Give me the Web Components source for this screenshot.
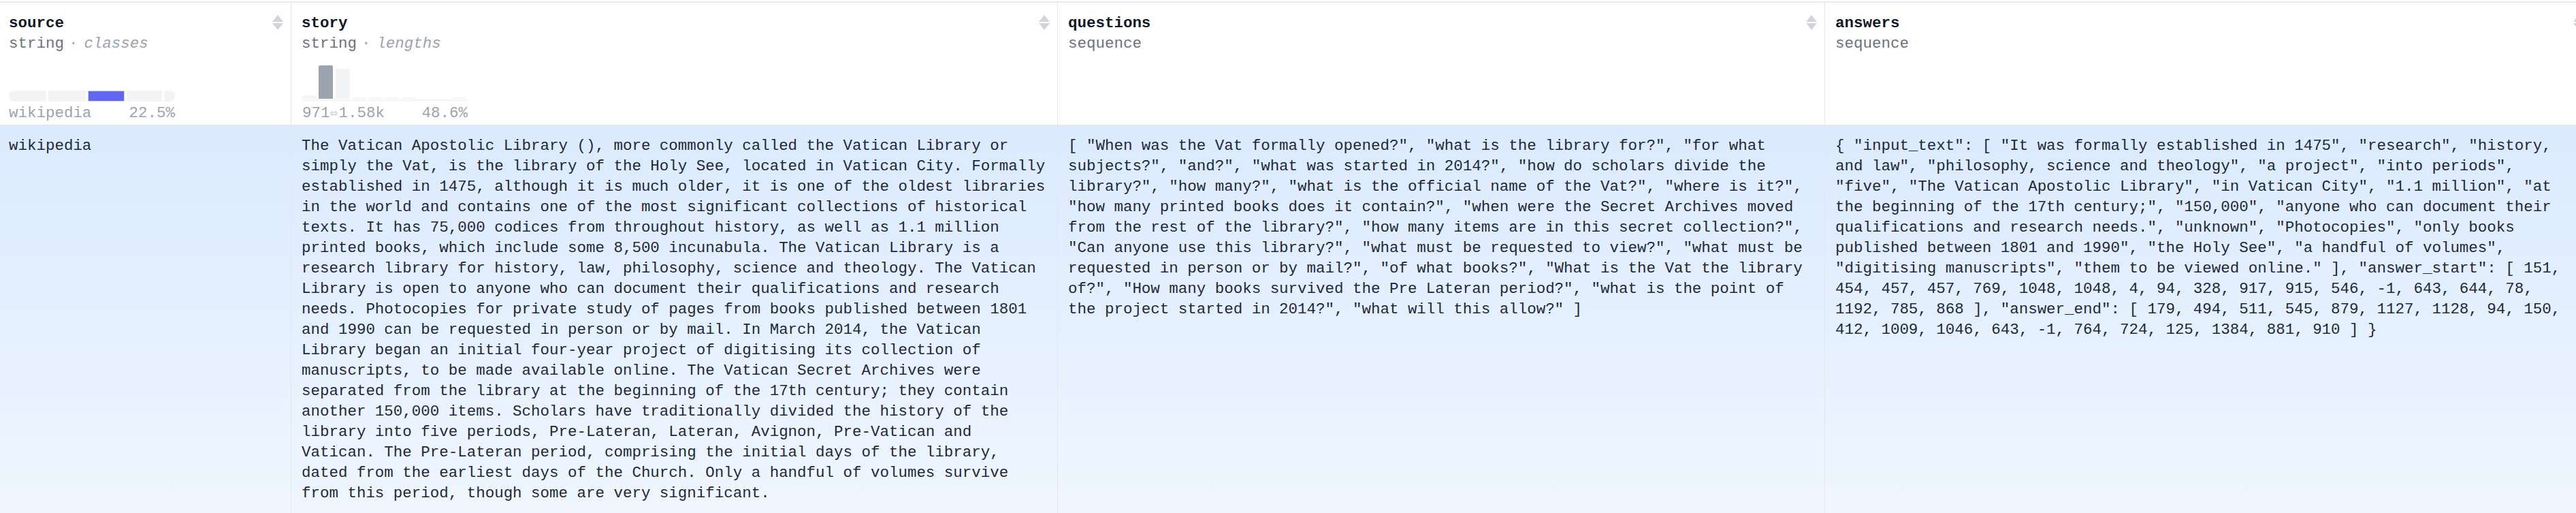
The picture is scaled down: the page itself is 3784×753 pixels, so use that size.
<!DOCTYPE html>
<html>
<head>
<meta charset="utf-8">
<title>Dataset viewer</title>
<style>
  html, body { margin: 0; background: #fff; overflow: hidden; }
  body { font: 400 22.48px/30px "Liberation Mono", "DejaVu Sans Mono", monospace; color: #1f2937; }
</style>
</head>
<body>
<data-table>
  <column-head name="source" type="string" kind="classes">
    <class-bar active="2" label="wikipedia" percent="22.5%"></class-bar>
  </column-head>
  <column-head name="story" type="string" kind="lengths">
    <length-histogram min="971" max="1.58k" percent="48.6%"></length-histogram>
  </column-head>
  <column-head name="questions" type="sequence"></column-head>
  <column-head name="answers" type="sequence"></column-head>

  <row-cell first>wikipedia</row-cell>
  <row-cell>The Vatican Apostolic Library (), more commonly called the Vatican Library or simply the Vat, is the library of the Holy See, located in Vatican City. Formally established in 1475, although it is much older, it is one of the oldest libraries in the world and contains one of the most significant collections of historical texts. It has 75,000 codices from throughout history, as well as 1.1 million printed books, which include some 8,500 incunabula. The Vatican Library is a research library for history, law, philosophy, science and theology. The Vatican Library is open to anyone who can document their qualifications and research needs. Photocopies for private study of pages from books published between 1801 and 1990 can be requested in person or by mail. In March 2014, the Vatican Library began an initial four-year project of digitising its collection of manuscripts, to be made available online. The Vatican Secret Archives were separated from the library at the beginning of the 17th century; they contain another 150,000 items. Scholars have traditionally divided the history of the library into five periods, Pre-Lateran, Lateran, Avignon, Pre-Vatican and Vatican. The Pre-Lateran period, comprising the initial days of the library, dated from the earliest days of the Church. Only a handful of volumes survive from this period, though some are very significant.</row-cell>
  <row-cell>[ "When was the Vat formally opened?", "what is the library for?", "for what subjects?", "and?", "what was started in 2014?", "how do scholars divide the library?", "how many?", "what is the official name of the Vat?", "where is it?", "how many printed books does it contain?", "when were the Secret Archives moved from the rest of the library?", "how many items are in this secret collection?", "Can anyone use this library?", "what must be requested to view?", "what must be requested in person or by mail?", "of what books?", "What is the Vat the library of?", "How many books survived the Pre Lateran period?", "what is the point of the project started in 2014?", "what will this allow?" ]</row-cell>
  <row-cell>{ "input_text": [ "It was formally established in 1475", "research", "history, and law", "philosophy, science and theology", "a project", "into periods", "five", "The Vatican Apostolic Library", "in Vatican City", "1.1 million", "at the beginning of the 17th century;", "150,000", "anyone who can document their qualifications and research needs.", "unknown", "Photocopies", "only books published between 1801 and 1990", "the Holy See", "a handful of volumes", "digitising manuscripts", "them to be viewed online." ], "answer_start": [ 151, 454, 457, 457, 769, 1048, 1048, 4, 94, 328, 917, 915, 546, -1, 643, 644, 78, 1192, 785, 868 ], "answer_end": [ 179, 494, 511, 545, 879, 1127, 1128, 94, 150, 412, 1009, 1046, 643, -1, 764, 724, 125, 1384, 881, 910 ] }</row-cell>
</data-table>

<script>
// outer grid, four columns, last one runs past the window edge
class DataTable extends HTMLElement {
  constructor() {
    super();
    this.attachShadow({ mode: 'open' });
    this.shadowRoot.innerHTML = `
      <style>
        :host { display: block; height: 753px; overflow: hidden; box-sizing: border-box; padding-top: 2px; }
        .grid {
          width: 3808px;
          display: grid;
          grid-template-columns: 428px 1126px 1127px 1127px;
          grid-template-rows: 180px auto;
          border-top: 2px solid #e8e8f3;
        }
      </style>
      <div class="grid"><slot></slot></div>
    `;
  }
}
customElements.define('data-table', DataTable);

class ColumnHead extends HTMLElement {
  constructor() {
    super();
    this.attachShadow({ mode: 'open' });
  }

  connectedCallback() {
    const name = this.getAttribute('name');
    const type = this.getAttribute('type');
    const kind = this.getAttribute('kind');
    const first = name === 'source';
    this.shadowRoot.innerHTML = `
      <style>
        :host {
          display: flex;
          flex-direction: column;
          box-sizing: border-box;
          padding: 15px 0 2px ${first ? 13 : 15}px;
          border-right: 1px solid #e5e7eb;
          border-bottom: 1px solid #e5e7eb;
          background: #fff;
          min-width: 0;
        }
        .top { display: flex; justify-content: space-between; }
        .name { font-weight: 700; color: #111827; }
        .type { color: #6b7280; }
        .kind { color: #9ca3af; font-style: italic; }
        .dot { color: #9ca3af; margin: 0 9px 0 7px; }
        svg { width: 16px; height: 22px; margin: 3px 11px 0 0; flex: none; }
        .stats { margin-top: auto; }
      </style>
      <div class="top">
        <div>
          <div class="name">${name}</div>
          <div class="type">${type}${kind ? `<span class="dot">·</span><span class="kind">${kind}</span>` : ''}</div>
        </div>
        <svg viewBox="0 0 16 22"><path d="M8 0 16 10H0z M0 12H16L8 22z" fill="#d1d5db"/></svg>
      </div>
      <div class="stats"><slot></slot></div>
    `;
  }
}
customElements.define('column-head', ColumnHead);

class ClassBar extends HTMLElement {
  constructor() {
    super();
    this.attachShadow({ mode: 'open' });
  }

  connectedCallback() {
    const active = parseInt(this.getAttribute('active'), 10);
    const sizes = [55, 55, 53, 52, 16];
    const segments = sizes.map((size, index) =>
      `<i style="flex: ${size} 0 0" class="${index === active ? 'on' : ''}"></i>`).join('');
    this.shadowRoot.innerHTML = `
      <style>
        :host { display: block; width: 244px; color: #9ca3af; }
        .bar { display: flex; gap: 3px; height: 16px; margin-bottom: 2px; border-radius: 8px; overflow: hidden; }
        i { background: #f3f4f6; box-sizing: border-box; }
        i.on { background: #6366f1; border: 1px solid #c7d2fe; }
        .text { display: flex; justify-content: space-between; }
      </style>
      <div class="bar">${segments}</div>
      <div class="text"><span>${this.getAttribute('label')}</span><span>${this.getAttribute('percent')}</span></div>
    `;
  }
}
customElements.define('class-bar', ClassBar);

class LengthHistogram extends HTMLElement {
  constructor() {
    super();
    this.attachShadow({ mode: 'open' });
  }

  connectedCallback() {
    const heights = [5, 49, 44, 2, 2, 2, 2, 0, 0, 2];
    const bars = heights.map((height, index) =>
      `<div class="slot"><i class="${index === 1 ? 'on' : ''}" style="height: ${height}px"></i></div>`).join('');
    this.shadowRoot.innerHTML = `
      <style>
        :host { display: block; width: 243px; margin-left: 1px; color: #9ca3af; }
        .bars { display: flex; height: 49px; align-items: flex-end; }
        .slot { flex: 1; display: flex; align-items: flex-end; }
        i { display: block; width: 21px; background: #f3f4f6; border-radius: 2px 2px 0 0; }
        i.on { background: #9ca3af; }
        .base { height: 2px; margin: 1px 0 3px; background: #f3f4f6; }
        .text { display: flex; justify-content: space-between; }
        .range { display: flex; align-items: center; }
        svg { width: 13px; height: 13px; flex: none; }
      </style>
      <div class="bars">${bars}</div>
      <div class="base"></div>
      <div class="text">
        <span class="range">${this.getAttribute('min')}<svg viewBox="0 0 13 13"><path d="M4.5 3 1.5 6.5 4.5 10M8.5 3 11.5 6.5 8.5 10M2.5 5H10.5M2.5 8H10.5" fill="none" stroke="#d1d5db" stroke-width="1.3"/></svg>${this.getAttribute('max')}</span>
        <span>${this.getAttribute('percent')}</span>
      </div>
    `;
  }
}
customElements.define('length-histogram', LengthHistogram);

class RowCell extends HTMLElement {
  constructor() {
    super();
    this.attachShadow({ mode: 'open' });
    this.shadowRoot.innerHTML = `
      <style>
        :host {
          display: block;
          box-sizing: border-box;
          padding: 15px 16px 14px 15px;
          border-right: 1px solid #e5e7eb;
          background: linear-gradient(#dbeafe, #eff6ff);
          color: #1f2937;
          min-width: 0;
        }
        :host([first]) { padding-left: 13px; }
      </style>
      <slot></slot>
    `;
  }
}
customElements.define('row-cell', RowCell);
</script>
</body>
</html>
